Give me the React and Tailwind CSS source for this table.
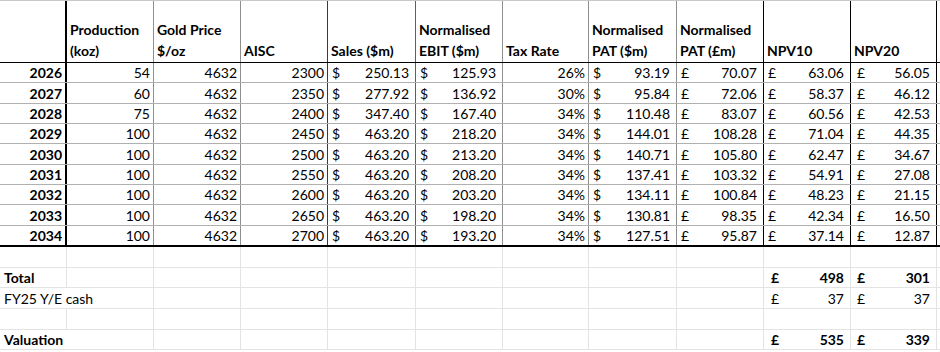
import React from "react";

// Column widths + right-hand border colour for the bordered block
const cols = [
  { w: "w-[67px]", line: "border-r-2 border-black" },
  { w: "w-[87px]", line: "border-r border-[#8f8f8f]" },
  { w: "w-[87px]", line: "border-r border-[#8f8f8f]" },
  { w: "w-[87px]", line: "border-r border-[#3a3a3a]" },
  { w: "w-[88px]", line: "border-r border-[#5f5f5f]" },
  { w: "w-[87px]", line: "border-r border-[#8f8f8f]" },
  { w: "w-[86px]", line: "border-r border-[#8f8f8f]" },
  { w: "w-[88px]", line: "border-r border-[#8f8f8f]" },
  { w: "w-[87px]", line: "border-r border-black" },
  { w: "w-[87px]", line: "border-r border-black" },
  { w: "w-[86px]", line: "border-r border-black" },
];

const headers = [
  ["", ""],
  ["Production", "(koz)"],
  ["Gold Price", "$/oz"],
  ["", "AISC"],
  ["", "Sales ($m)"],
  ["Normalised", "EBIT ($m)"],
  ["", "Tax Rate"],
  ["Normalised", "PAT ($m)"],
  ["Normalised", "PAT (£m)"],
  ["", "NPV10"],
  ["", "NPV20"],
];

const pat = [93.19, 95.84, 110.48, 144.01, 140.71, 137.41, 134.11, 130.81, 127.51];
const patGbp = [70.07, 72.06, 83.07, 108.28, 105.8, 103.32, 100.84, 98.35, 95.87];
const npv10 = [63.06, 58.37, 60.56, 71.04, 62.47, 54.91, 48.23, 42.34, 37.14];
const npv20 = [56.05, 46.12, 42.53, 44.35, 34.67, 27.08, 21.15, 16.5, 12.87];
const production = [54, 60, 75, 100, 100, 100, 100, 100, 100];
const sales = [250.13, 277.92, 347.4, 463.2, 463.2, 463.2, 463.2, 463.2, 463.2];
const ebit = [125.93, 136.92, 167.4, 218.2, 213.2, 208.2, 203.2, 198.2, 193.2];
const tax = [26, 30, 34, 34, 34, 34, 34, 34, 34];

const rows = production.map((p, i) => ({
  year: 2026 + i,
  production: p,
  gold: 4632,
  aisc: 2300 + i * 50,
  sales: sales[i],
  ebit: ebit[i],
  tax: tax[i],
  pat: pat[i],
  patGbp: patGbp[i],
  npv10: npv10[i],
  npv20: npv20[i],
}));

const Money = ({ sym, value, bold, pl = "pl-[4px]" }) => (
  <div className={`flex w-full justify-between ${pl} pr-[6px] ${bold ? "font-bold" : ""}`}>
    <span>{sym}</span>
    <span>{value}</span>
  </div>
);

const Plain = ({ children, bold }) => (
  <div className={`w-full text-right pr-[3px] ${bold ? "font-bold" : ""}`}>{children}</div>
);

const App = () => {
  return (
    <div
      className="w-[940px] h-[352px] overflow-hidden bg-white text-black text-[14px] leading-[16px]"
      style={{ fontFamily: "Lato, 'Liberation Sans', sans-serif" }}
    >
      {/* Header */}
      <div className="flex h-[63px] border-t border-b border-t-[#c8c8c8] border-b-black">
        {headers.map((h, i) => (
          <div
            key={i}
            className={`${cols[i].w} ${cols[i].line} shrink-0 flex flex-col justify-end pb-[1px] pl-[3px] font-bold leading-[21px]`}
          >
            <span>{h[0] || "\u00a0"}</span>
            <span>{h[1] || "\u00a0"}</span>
          </div>
        ))}
      </div>

      {/* Data rows */}
      {rows.map((r, idx) => {
        const cells = [
          <Plain bold>{r.year}</Plain>,
          <Plain>{r.production}</Plain>,
          <Plain>{r.gold}</Plain>,
          <Plain>{r.aisc}</Plain>,
          <Money sym="$" value={r.sales.toFixed(2)} />,
          <Money sym="$" value={r.ebit.toFixed(2)} />,
          <Plain>{r.tax}%</Plain>,
          <Money sym="$" value={r.pat.toFixed(2)} />,
          <Money sym="£" value={r.patGbp.toFixed(2)} />,
          <Money sym="£" value={r.npv10.toFixed(2)} />,
          <Money sym="£" value={r.npv20.toFixed(2)} pl="pl-[6px]" />,
        ];
        const last = idx === rows.length - 1;
        return (
          <div
            key={r.year}
            className={`flex ${
              last ? "h-[21.5px] border-b-2 border-black" : "h-[20.33px] border-b border-[#b0b0b0]"
            }`}
          >
            {cells.map((c, i) => (
              <div
                key={i}
                className={`${cols[i].w} ${cols[i].line} shrink-0 flex items-end pb-[1px]`}
              >
                {c}
              </div>
            ))}
          </div>
        );
      })}

      {/* Summary rows below the table */}
      {[
        { label: "", bold: false },
        { label: "Total", bold: true, a: "498", b: "301" },
        { label: "FY25 Y/E cash", bold: false, a: "37", b: "37" },
        { label: "", bold: false },
        { label: "Valuation", bold: true, a: "535", b: "339" },
      ].map((row, ri) => (
        <div key={ri} className="flex h-[20.6px] border-b border-[#e3e3e3]">
          {cols.map((c, i) => (
            <div
              key={i}
              className={`${c.w} shrink-0 flex items-end pb-[1px] border-r ${
                i === 0 && row.label.length > 8 ? "border-transparent" : "border-[#e3e3e3]"
              }`}
            >
              {i === 0 && row.label && (
                <span className={`pl-[4px] whitespace-nowrap ${row.bold ? "font-bold" : ""}`}>
                  {row.label}
                </span>
              )}
              {i === 9 && row.a && (
                <Money sym="£" value={row.a} bold={row.bold} pl="pl-[7px]" />
              )}
              {i === 10 && row.b && (
                <Money sym="£" value={row.b} bold={row.bold} pl="pl-[6px]" />
              )}
            </div>
          ))}
        </div>
      ))}
    </div>
  );
};

export default App;
